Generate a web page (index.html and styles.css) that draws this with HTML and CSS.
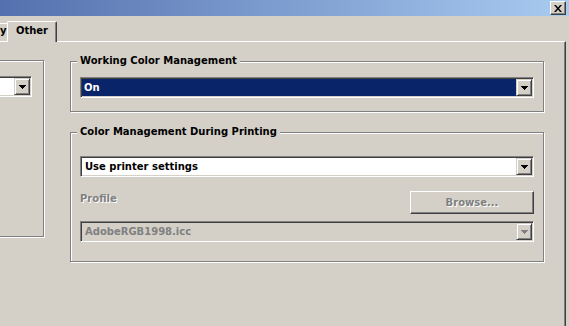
FILE: index.html
```html
<!DOCTYPE html>
<html lang="en">
<head>
    <meta charset="UTF-8">
    <title>Other</title>
    <link rel="stylesheet" href="styles.css">
</head>
<body>
    <div class="window">
        <div class="titlebar">
            <button type="button" class="close-button">
                <svg width="8" height="7" viewBox="0 0 8 7"><path d="M0 0h2l2 2.4 2-2.4h2l-3 3.5 3 3.5h-2l-2-2.4-2 2.4h-2l3-3.5z" fill="#000"/></svg>
            </button>
        </div>

        <div class="tabs">
            <div class="tab tab-prev">y</div>
            <div class="tab tab-active">Other</div>
        </div>

        <div class="panel">
            <div class="group group-left">
                <div class="combo">
                    <div class="combo-value"></div>
                    <span class="combo-btn"><svg width="7" height="4" viewBox="0 0 7 4"><path d="M0 0h7v1h-1v1h-1v1h-1v1h-1v-1h-1v-1h-1v-1h-1z" fill="#000"/></svg></span>
                </div>
            </div>

            <div class="column">
                <div class="group group-working">
                    <div class="group-title">Working Color Management</div>
                    <div class="combo combo-first">
                        <div class="combo-value selected">On</div>
                        <span class="combo-btn"><svg width="7" height="4" viewBox="0 0 7 4"><path d="M0 0h7v1h-1v1h-1v1h-1v1h-1v-1h-1v-1h-1v-1h-1z" fill="#000"/></svg></span>
                    </div>
                </div>

                <div class="group group-printing">
                    <div class="group-title">Color Management During Printing</div>
                    <div class="combo combo-first">
                        <div class="combo-value">Use printer settings</div>
                        <span class="combo-btn"><svg width="7" height="4" viewBox="0 0 7 4"><path d="M0 0h7v1h-1v1h-1v1h-1v1h-1v-1h-1v-1h-1v-1h-1z" fill="#000"/></svg></span>
                    </div>
                    <div class="row">
                        <span class="label">Profile</span>
                        <button type="button" class="button" disabled>Browse...</button>
                    </div>
                    <div class="combo combo-disabled">
                        <div class="combo-value">AdobeRGB1998.icc</div>
                        <span class="combo-btn"><svg width="7" height="4" viewBox="0 0 7 4"><path d="M0 0h7v1h-1v1h-1v1h-1v1h-1v-1h-1v-1h-1v-1h-1z" fill="#808080"/></svg></span>
                    </div>
                </div>
            </div>
        </div>
    </div>
</body>
</html>
```

FILE: styles.css
```css
* {
    box-sizing: border-box;
}
body {
    margin: 0;
    background-color: #d4d0c8;
    font-family: "DejaVu Sans", Verdana, sans-serif;
    font-size: 10px;
    font-weight: bold;
    color: #000;
    overflow: hidden;
}
.window {
    width: 569px;
    height: 326px;
    display: flex;
    flex-direction: column;
    overflow: hidden;
}
.titlebar {
    height: 16px;
    flex: none;
    display: flex;
    justify-content: flex-end;
    align-items: center;
    padding-right: 3px;
    background: linear-gradient(to right, #5470ae, #a8cbf1);
}
.close-button {
    width: 16px;
    height: 14px;
    padding: 0;
    display: flex;
    align-items: center;
    justify-content: center;
    background-color: #d4d0c8;
    border: 1px solid;
    border-color: #fff #404040 #404040 #fff;
    box-shadow: inset -1px -1px #808080;
}

/* tabs */
.tabs {
    height: 25px;
    flex: none;
    display: flex;
    align-items: flex-end;
}
.tab {
    background-color: #d4d0c8;
    border-top: 1px solid #fff;
    line-height: 12px;
    white-space: nowrap;
}
.tab-prev {
    width: 7px;
    height: 18px;
    padding: 1px 0 0 0;
}
.tab-active {
    width: 50px;
    height: 21px;
    margin-bottom: -1px;
    position: relative;
    z-index: 1;
    padding-top: 3px;
    text-align: center;
    border-left: 1px solid #fff;
    border-right: 1px solid #404040;
    border-radius: 2px 2px 0 0;
    box-shadow: inset -1px 0 #808080;
}

/* page */
.panel {
    flex: 1;
    display: flex;
    align-items: flex-start;
    margin-right: 3px;
    border-top: 1px solid #fff;
    border-right: 1px solid #404040;
    box-shadow: inset -1px 0 #808080;
}
.group {
    border: 1px solid #808080;
    box-shadow: inset 1px 1px #fff, 1px 1px #fff;
}
.group-left {
    flex: none;
    width: 104px;
    height: 177px;
    margin: 18px 26px 0 -60px;
    padding: 15px 11px 0 0;
}
.column {
    flex: none;
    width: 474px;
    margin-top: 19px;
}
.group-working {
    padding: 0 9px 13px 9px;
}
.group-printing {
    margin-top: 20px;
    padding: 0 9px 19px 9px;
}
.group-title {
    width: fit-content;
    margin: -7px 0 0 -3px;
    padding: 0 3px;
    line-height: 12px;
    background-color: #d4d0c8;
}

/* combo boxes */
.combo {
    height: 21px;
    display: flex;
    padding: 1px;
    background-color: #fff;
    border: 1px solid;
    border-color: #808080 #fff #fff #808080;
    box-shadow: inset 1px 1px #404040, inset -1px -1px #d4d0c8;
}
.combo-first {
    margin-top: 10px;
}
.group-printing .combo-first {
    margin-top: 18px;
}
.combo-value {
    flex: 1;
    line-height: 17px;
    padding-left: 3px;
    white-space: nowrap;
}
.combo-value.selected {
    background-color: #0a246a;
    color: #fff;
    padding-left: 2px;
}
.combo-btn {
    width: 16px;
    flex: none;
    display: flex;
    align-items: center;
    justify-content: center;
    background-color: #d4d0c8;
    border: 1px solid;
    border-color: #d4d0c8 #404040 #404040 #d4d0c8;
    box-shadow: inset 1px 1px #fff, inset -1px -1px #808080;
}
.combo-disabled {
    margin-top: 7px;
    background-color: #d4d0c8;
}
.combo-disabled .combo-value {
    color: #808080;
}

/* profile row */
.row {
    display: flex;
    justify-content: space-between;
    align-items: flex-start;
    margin-top: 14px;
}
.label {
    padding-top: 2px;
    line-height: 12px;
    color: #808080;
    text-shadow: 1px 1px #fff;
}
.button {
    width: 124px;
    height: 23px;
    padding: 0;
    font: inherit;
    line-height: 12px;
    color: #808080;
    text-shadow: 1px 1px #fff;
    background-color: #d4d0c8;
    border: 1px solid;
    border-color: #fff #404040 #404040 #fff;
    box-shadow: inset -1px -1px #808080;
}
```
